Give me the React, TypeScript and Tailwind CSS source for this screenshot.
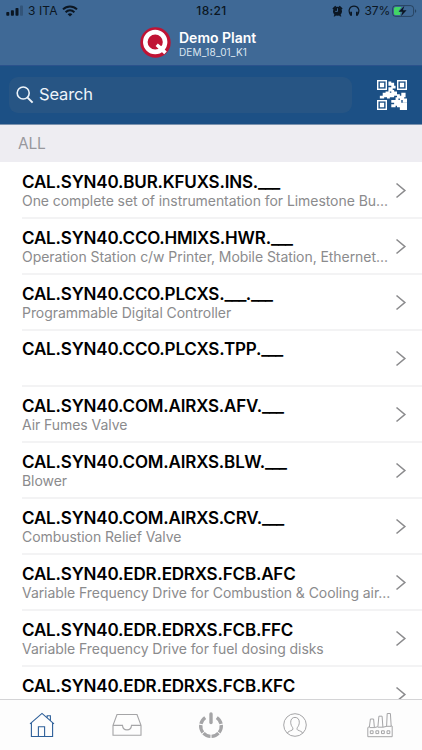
import React from 'react';

interface Item {
  code: string;
  label: string;
}

const items: Item[] = [
  { code: 'CAL.SYN40.BUR.KFUXS.INS.___', label: 'One complete set of instrumentation for Limestone Bu...' },
  { code: 'CAL.SYN40.CCO.HMIXS.HWR.___', label: 'Operation Station c/w Printer, Mobile Station, Ethernet...' },
  { code: 'CAL.SYN40.CCO.PLCXS.___.___', label: 'Programmable Digital Controller' },
  { code: 'CAL.SYN40.CCO.PLCXS.TPP.___', label: '' },
  { code: 'CAL.SYN40.COM.AIRXS.AFV.___', label: 'Air Fumes Valve' },
  { code: 'CAL.SYN40.COM.AIRXS.BLW.___', label: 'Blower' },
  { code: 'CAL.SYN40.COM.AIRXS.CRV.___', label: 'Combustion Relief Valve' },
  { code: 'CAL.SYN40.EDR.EDRXS.FCB.AFC', label: 'Variable Frequency Drive for Combustion & Cooling air...' },
  { code: 'CAL.SYN40.EDR.EDRXS.FCB.FFC', label: 'Variable Frequency Drive for fuel dosing disks' },
  { code: 'CAL.SYN40.EDR.EDRXS.FCB.KFC', label: 'Variable Frequency Drive for kiln disk' },
];

const StatusBar = () => (
  <div className="flex h-[21px] items-center justify-between pl-[6px] pr-[5px] text-[12px] leading-none text-[#0b1622]">
    <div className="flex w-[160px] items-center">
      <svg width="18" height="11" viewBox="0 0 18 11" fill="currentColor">
        <rect x="0.3" y="7" width="3" height="3.7" rx="0.8" />
        <rect x="4.9" y="5.2" width="3" height="5.5" rx="0.8" />
        <rect x="9.5" y="3" width="3" height="7.7" rx="0.8" />
        <rect x="14" y="0.6" width="3" height="10.1" rx="0.8" opacity="0.25" />
      </svg>
      <span className="ml-[4px] tracking-[0.1px]">3 ITA</span>
      <svg className="ml-[4px]" width="16" height="12" viewBox="0 0 16 12" fill="none" stroke="currentColor" strokeWidth="2">
        <path d="M1 4.4C5 .4 11 .4 15 4.4" />
        <path d="M3.6 7.2c2.6-2.5 6.2-2.5 8.8 0" />
        <path d="M8 11.6 5.6 9.2c1.4-1.3 3.4-1.3 4.8 0z" fill="currentColor" stroke="none" />
      </svg>
    </div>
    <span className="font-medium tracking-[0.35px]">18:21</span>
    <div className="flex w-[160px] items-center justify-end">
      <svg width="11" height="12" viewBox="0 0 11 12" fill="currentColor">
        <circle cx="5.5" cy="6.2" r="4.5" />
        <path d="M.4 3.4 3.2.7l1.1 1L1.4 4.5zM10.6 3.4 7.8.7l-1.1 1 2.9 2.8zM1.5 11.2l1.4-2 1.2.8-1.2 1.5zM9.5 11.2l-1.4-2-1.2.8 1.2 1.5z" />
        <path d="M5.5 3.3v3.1H3.2" fill="none" stroke="#3f6996" strokeWidth="0.9" />
      </svg>
      <svg className="ml-[5px]" width="12" height="12" viewBox="0 0 12 12" fill="none" stroke="currentColor" strokeWidth="1.2">
        <path d="M2.6 10.1C-.8 4.8 2.2 1.2 6 1.2s6.8 3.6 3.4 8.9" />
        <path d="M3.1 6.8v4M8.9 6.8v4" strokeWidth="1.8" />
      </svg>
      <span className="ml-[5px] tracking-[-0.2px]">37%</span>
      <svg className="ml-[2px]" width="25" height="12" viewBox="0 0 25 12">
        <rect x="0.6" y="0.6" width="21" height="10.8" rx="3" fill="none" stroke="#0b1622" strokeOpacity="0.45" />
        <path d="M23 4.2c1.7.5 1.7 3.1 0 3.6z" fill="#0b1622" fillOpacity="0.45" />
        <path d="M3.5 2h6L6.3 6.6l2.2.5L8 10H3.5Q2 10 2 8.5v-5Q2 2 3.5 2z" fill="#42d565" />
        <path d="M12.4.8 6.8 6.7h3.7L9 11.3l5.6-6h-3.7z" fill="#0b1622" />
      </svg>
    </div>
  </div>
);

const PlantLogo = () => (
  <svg width="31" height="31" viewBox="0 0 31 31">
    <circle cx="15.5" cy="15.5" r="15.2" fill="#c01334" />
    <circle cx="15.2" cy="15" r="9.9" fill="none" stroke="#fff" strokeWidth="4.6" />
    <path d="m15.6 19 2.2-2.4 3.4 2.6 2.4-1.6 1.4 1.2-1.8 2.4 3.6 3.4-2.6 2.6z" fill="#fff" />
  </svg>
);

const QrIcon = () => (
  <svg width="30" height="30" viewBox="0 0 21 21" fill="#fff">
    <g fill="none" stroke="#fff" strokeWidth="1">
      <rect x="0.5" y="0.5" width="6" height="6" />
      <rect x="14.5" y="0.5" width="6" height="6" />
      <rect x="0.5" y="14.5" width="6" height="6" />
    </g>
    <path d="M2 2h3v3H2zM16 2h3v3h-3zM2 16h3v3H2z" />
    <path d="M8 1h2v1h2v2h1v2h-2v1h1v1h2v2h2v1h1V9h3v3h-1v1h2v3h-3v-2h-2v-1h-2v-2h-2v1H9v1H7v-1H5v1H2v-2h2V9h2V8h3v1h1V8H8V5h2V4H8z" />
    <path d="M13 12h2v2h2v2h4v5h-5v-2h-2v-1h-1v1h-3v-2h2v-1h-2v-2h3z" />
  </svg>
);

const Header = () => (
  <header className="h-[66px] shrink-0 border-b border-[#2b528c] bg-[#3f6996]">
    <StatusBar />
    <div className="flex gap-[8px] pl-[140px] pt-[6px]">
      <PlantLogo />
      <div className="pt-[2px] text-white">
        <div className="text-[14px] font-semibold leading-[17px]">Demo Plant</div>
        <div className="text-[10px] leading-[12px] tracking-[0.15px] text-[#dce6f0]">DEM_18_01_K1</div>
      </div>
    </div>
  </header>
);

const SearchBar = () => (
  <div className="flex h-[59px] shrink-0 items-center border-b border-[#7c93af] bg-[#1c5085] pl-[9px] pr-[15px]">
    <div className="flex h-[36px] w-[343px] items-center rounded-[9px] bg-[#275584] pl-[7px] text-[#eef4fa]">
      <svg width="18" height="18" viewBox="0 0 18 18" fill="none" stroke="currentColor" strokeWidth="1.6">
        <circle cx="7.2" cy="7" r="6" />
        <path d="m11.6 11.6 5 5" strokeWidth="2" />
      </svg>
      <span className="ml-[5px] pb-px text-[16.5px] tracking-[-0.15px]">Search</span>
    </div>
    <div className="ml-auto">
      <QrIcon />
    </div>
  </div>
);

// blank segments are set tighter so that the underscores join into one bar
const Code: React.FC<{ code: string }> = ({ code }) => (
  <div className="whitespace-nowrap text-[17px] font-semibold leading-[20px] tracking-[-0.18px] text-black">
    {code.split(/(_+)/).map((part, index) =>
      part.startsWith('_') ? (
        <span key={index} className="tracking-[-0.9px]">{part}</span>
      ) : (
        part
      )
    )}
  </div>
);

const Row: React.FC<Item> = ({ code, label }) => (
  <li className="flex h-[56px] shrink-0 items-center border-b-2 border-[#f3f3f4]">
    <div className={label ? 'w-[370px] pt-px' : 'w-[370px] pb-[19px]'}>
      <Code code={code} />
      {label && <div className="whitespace-nowrap text-[14px] leading-[17px] tracking-[-0.06px] text-[#8b8b8d]">{label}</div>}
    </div>
    <svg className="ml-[3px]" width="13" height="17" viewBox="0 0 13 17" fill="none" stroke="#8b8b8d" strokeWidth="1.6">
      <path d="m1.5 1.5 8.3 7-8.3 7" />
    </svg>
  </li>
);

const HomeIcon = () => (
  <svg width="26" height="26" viewBox="0 0 26 26" fill="none" stroke="#2d5f99" strokeWidth="1.1">
    <path d="M1 11.8 13 1.4l12 10.4M2.4 10.8v13.7h21.2V10.8M9.4 24.5v-9.8h6.2v9.8M18.2 5.5V3.8h3.2v5" />
  </svg>
);

const InboxIcon = () => (
  <svg width="30" height="24" viewBox="0 0 30 24" fill="none" stroke="#a5a5a7" strokeWidth="1.1">
    <path d="M1 12.4 5 1.5h20l4 10.9v9.8H1zM1 12.4h9.5c.4 6 8.6 6 9 0H29" />
  </svg>
);

const PowerIcon = () => (
  <svg width="26" height="28" viewBox="0 0 26 28" fill="none" stroke="#a5a5a7">
    <path d="M13 3v8.5" strokeWidth="3.4" strokeLinecap="round" />
    <path d="M18.8 6.6a10.3 10.3 0 1 1-11.6 0" strokeWidth="3.4" pathLength="60" strokeDasharray="9 1.2" />
  </svg>
);

const ProfileIcon = () => (
  <svg width="24" height="24" viewBox="0 0 24 24" fill="none" stroke="#a5a5a7" strokeWidth="1">
    <circle cx="12" cy="12" r="11.3" />
    <path d="M4.3 20.2c.5-1.6 2.8-2.2 5.1-3.2.6-.3.7-1.8.3-2.3-1.1-1.4-2-3.3-2-5.5C7.7 6.2 9.4 4.4 12 4.4s4.3 1.8 4.3 4.8c0 2.2-.9 4.1-2 5.5-.4.5-.3 2 .3 2.3 2.3 1 4.6 1.6 5.1 3.2" />
  </svg>
);

const FactoryIcon = () => (
  <svg width="26" height="26" viewBox="0 0 26 26" fill="none" stroke="#a5a5a7" strokeWidth="1">
    <path d="M2.4 14.7.8 15.5v9.2h24.4V14.2l-1-.3M7.4 15.6l3.5-.9M15.9 15.2l3.7-.8" />
    <path d="M2.4 15 3.4 7h3.2l.8 8.6H2.4M10.9 14.7l1-10.5h3.2l.8 11h-5M19.6 14.7l.6-13.2h3.2l.8 12.8h-4.6" />
    <path d="M3.3 18.8h2.8v2.8H3.3zM8.9 18.8h2.8v2.8H8.9zM14.5 18.8h2.8v2.8h-2.8zM20 18.8h2.8v2.8H20z" />
  </svg>
);

const tabs = [HomeIcon, InboxIcon, PowerIcon, ProfileIcon, FactoryIcon];

const TabBar = () => (
  <nav className="grid h-[51px] shrink-0 grid-cols-5 border-t border-[#d4d4d6] bg-[#fdfdfd]">
    {tabs.map((Icon, index) => (
      <div key={index} className="flex items-center justify-center">
        <Icon />
      </div>
    ))}
  </nav>
);

const App: React.FC = () => (
  <div className="flex h-[750px] w-[422px] flex-col overflow-hidden bg-white font-['Inter','Liberation_Sans',sans-serif]">
    <Header />
    <SearchBar />
    <div className="flex h-[37px] shrink-0 items-center bg-[#eeedf2] pl-[18px] text-[15.5px] tracking-[-0.2px] text-[#98989d]">ALL</div>
    <ul className="flex min-h-0 flex-1 flex-col overflow-hidden pl-[22px] pt-px">
      {items.map((item) => (
        <Row key={item.code} {...item} />
      ))}
    </ul>
    <TabBar />
  </div>
);

export default App;
